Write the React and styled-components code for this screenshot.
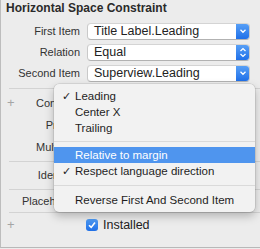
import React from 'react';
import styled, { createGlobalStyle } from 'styled-components';

const GlobalStyle = createGlobalStyle`
  html, body {
    margin: 0;
    padding: 0;
    background: #ececec;
  }
  body {
    font-family: "Liberation Sans", Arial, sans-serif;
    color: #262626;
  }
`;

const Panel = styled.div`
  position: relative;
  width: 259px;
  height: 247px;
  border-left: 1px solid #bdbdbd;
  border-bottom: 1px solid #b8b8b8;
  background: #ececec;
  display: flex;
  flex-direction: column;
  overflow: hidden;
`;

const Title = styled.div`
  height: 16px;
  line-height: 16px;
  padding-left: 5px;
  font-size: 12px;
  font-weight: bold;
  color: #2a2a2a;
`;

const Fields = styled.div`
  display: flex;
  flex-direction: column;
  gap: 3px;
  padding: 6px 10px 0 0;
`;

const FieldRow = styled.div`
  display: grid;
  grid-template-columns: 79px 1fr;
  column-gap: 7px;
  align-items: center;
  height: 18px;
`;

const Label = styled.div`
  text-align: right;
  font-size: 11px;
  color: #333;
  white-space: nowrap;
`;

const Popup = styled.div`
  position: relative;
  height: 17px;
  box-sizing: border-box;
  background: #fff;
  border: 1px solid #c9c9c9;
  border-top-color: #d4d4d4;
  border-bottom-color: #b2b2b2;
  border-radius: 4px;
  font-size: 12.5px;
  line-height: 15px;
  padding-left: 6px;
  color: #222;
  overflow: hidden;
`;

const PopupArrow = styled.div`
  position: absolute;
  top: -1px;
  right: -1px;
  bottom: -1px;
  width: 14px;
  border-radius: 0 4px 4px 0;
  background: linear-gradient(#5aa2f7, #1c6de8);
  display: flex;
  align-items: center;
  justify-content: center;
`;

const Divider = styled.div`
  height: 1px;
  margin-left: 8px;
  background: #d3d3d3;
  margin-top: ${p => p.$top || 0}px;
`;

const Group = styled.div`
  display: flex;
  flex-direction: column;
  padding: ${p => p.$pad || '0'};
`;

const Row = styled.div`
  position: relative;
  display: grid;
  grid-template-columns: 79px 1fr;
  column-gap: 6px;
  align-items: center;
  height: ${p => p.$h || 22}px;
`;

const Plus = styled.span`
  position: absolute;
  left: 6px;
  top: 50%;
  transform: translateY(-52%);
  font-size: 13px;
  font-weight: 300;
  color: #a5a5a5;
`;

const CheckWrap = styled.label`
  display: flex;
  align-items: center;
  gap: 5px;
  font-size: 12.5px;
  color: #222;
`;

const CheckBox = styled.span`
  width: 12px;
  height: 12px;
  border-radius: 3px;
  background: linear-gradient(#4f9cf6, #1f6fe6);
  display: flex;
  align-items: center;
  justify-content: center;
`;

const Menu = styled.div`
  position: absolute;
  left: 53px;
  top: 84px;
  width: 201px;
  padding: 4px 0;
  box-sizing: border-box;
  background: #f2f2f2;
  border-radius: 5px;
  box-shadow: 0 0 0 0.5px rgba(0, 0, 0, 0.15), 0 4px 10px rgba(0, 0, 0, 0.25);
  font-size: 11.5px;
  color: #1e1e1e;
`;

const MenuItem = styled.div`
  position: relative;
  height: 16px;
  line-height: 16px;
  padding-left: 21px;
  white-space: nowrap;
  background: ${p => (p.$active ? '#4f95ee' : 'transparent')};
  color: ${p => (p.$active ? '#fff' : '#1e1e1e')};
`;

const Check = styled.span`
  position: absolute;
  left: 8px;
  top: 0;
  font-size: 11px;
`;

const MenuSep = styled.div`
  height: 1px;
  margin: ${p => p.$m || '5px 0'};
  background: #dadada;
`;

const Chevron = () => (
  <svg width="8" height="6" viewBox="0 0 8 6">
    <path d="M1.5 1.8 L4 4.3 L6.5 1.8" fill="none" stroke="#fff" strokeWidth="1.3" />
  </svg>
);

const UpDown = () => (
  <svg width="8" height="11" viewBox="0 0 8 11">
    <path d="M1.5 4 L4 1.6 L6.5 4 M1.5 7 L4 9.4 L6.5 7" fill="none" stroke="#fff" strokeWidth="1.3" />
  </svg>
);

const Tick = () => (
  <svg width="10" height="10" viewBox="0 0 10 10">
    <path d="M2 5.2 L4.2 7.4 L8 2.6" fill="none" stroke="#fff" strokeWidth="1.6" />
  </svg>
);

const fields = [
  { label: 'First Item', value: 'Title Label.Leading', icon: <Chevron /> },
  { label: 'Relation', value: 'Equal', icon: <UpDown /> },
  { label: 'Second Item', value: 'Superview.Leading', icon: <Chevron /> },
];

export default function App() {
  return (
    <>
      <GlobalStyle />
      <Panel>
        <Title>Horizontal Space Constraint</Title>
        <Fields>
          {fields.map(f => (
            <FieldRow key={f.label}>
              <Label>{f.label}</Label>
              <Popup>
                {f.value}
                <PopupArrow>{f.icon}</PopupArrow>
              </Popup>
            </FieldRow>
          ))}
        </Fields>

        <Divider $top={6} />
        <Group $pad="3px 0">
          <Row>
            <Plus>+</Plus>
            <Label>Constant</Label>
          </Row>
          <Row>
            <Label>Priority</Label>
          </Row>
          <Row>
            <Label>Multiplier</Label>
          </Row>
        </Group>
        <Divider />
        <Group $pad="2px 0 3px">
          <Row>
            <Label>Identifier</Label>
          </Row>
        </Group>
        <Divider />
        <Group>
          <Row $h={22}>
            <Label>Placeholder</Label>
          </Row>
        </Group>
        <Divider />
        <Group $pad="1px 0 0">
          <Row $h={22}>
            <Plus>+</Plus>
            <span />
            <CheckWrap>
              <CheckBox>
                <Tick />
              </CheckBox>
              Installed
            </CheckWrap>
          </Row>
        </Group>

        <Menu>
          <MenuItem>
            <Check>✓</Check>Leading
          </MenuItem>
          <MenuItem>Center X</MenuItem>
          <MenuItem>Trailing</MenuItem>
          <MenuSep />
          <MenuItem $active>Relative to margin</MenuItem>
          <MenuItem>
            <Check>✓</Check>Respect language direction
          </MenuItem>
          <MenuSep $m="6px 0 6px" />
          <MenuItem>Reverse First And Second Item</MenuItem>
        </Menu>
      </Panel>
    </>
  );
}
